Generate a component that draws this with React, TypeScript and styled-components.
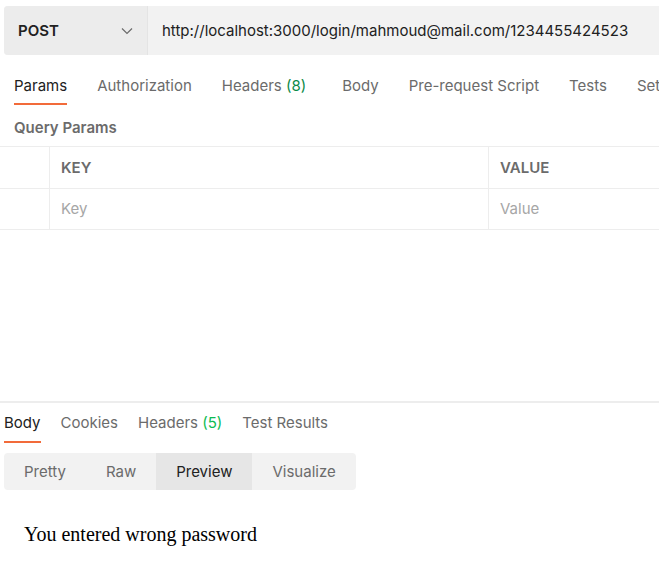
import React from "react";
import styled, { createGlobalStyle } from "styled-components";

const Global = createGlobalStyle`
  html, body { margin: 0; padding: 0; background: #ffffff; }
  body { font-family: Inter, "Noto Sans", "Liberation Sans", sans-serif; }
  * { box-sizing: border-box; }
`;

const Page = styled.div`
  width: 659px;
  height: 569px;
  overflow: hidden;
  display: flex;
  flex-direction: column;
`;

const RequestBar = styled.div`
  display: flex;
  height: 49px;
  margin: 6px -40px 0 4px;
  border-radius: 4px;
  background: #f2f2f2;
  overflow: hidden;
`;

const MethodBox = styled.div`
  width: 144px;
  flex: none;
  display: flex;
  align-items: center;
  justify-content: space-between;
  padding: 0 14px 0 14px;
  background: #ececec;
  border-right: 1px solid #e4e4e4;
  font-weight: 600;
  font-size: 15px;
  color: #212121;
`;

const UrlText = styled.div`
  display: flex;
  align-items: center;
  padding-left: 14px;
  font-size: 15px;
  color: #212121;
  white-space: nowrap;
`;

const TabRow = styled.div<{ $gap: number; $pad: number; $top: number }>`
  display: flex;
  gap: ${(p) => p.$gap}px;
  padding-left: ${(p) => p.$pad}px;
  margin-top: ${(p) => p.$top}px;
  white-space: nowrap;
`;

const Tab = styled.div<{ $active?: boolean; $pt: number; $pb: number }>`
  padding-top: ${(p) => p.$pt}px;
  padding-bottom: ${(p) => p.$pb}px;
  line-height: 20px;
  font-size: 15px;
  color: ${(p) => (p.$active ? "#212121" : "#6b6b6b")};
  border-bottom: 2px solid ${(p) => (p.$active ? "#f26b3a" : "transparent")};
`;

const Count = styled.span<{ $color: string }>`
  color: ${(p) => p.$color};
`;

const SectionLabel = styled.div`
  padding: 13px 14px 8px;
  line-height: 20px;
  font-size: 15px;
  font-weight: 600;
  color: #6b6b6b;
`;

const Table = styled.div`
  display: grid;
  grid-template-columns: 49px 439px 1fr;
  border-top: 1px solid #ededed;
`;

const Cell = styled.div<{ $head?: boolean }>`
  height: ${(p) => (p.$head ? 42 : 41)}px;
  display: flex;
  align-items: center;
  padding-left: 11px;
  padding-bottom: ${(p) => (p.$head ? 0 : 2)}px;
  border-bottom: 1px solid #ededed;
  border-left: 1px solid #ededed;
  font-size: 15px;
  font-weight: ${(p) => (p.$head ? 600 : 400)};
  color: ${(p) => (p.$head ? "#6b6b6b" : "#a6a6a6")};
  &:nth-child(3n + 1) {
    border-left: none;
  }
`;

const Spacer = styled.div`
  flex: 1;
`;

const Divider = styled.div`
  height: 2px;
  background: #ededed;
  flex: none;
`;

const Segmented = styled.div`
  display: flex;
  align-self: flex-start;
  margin: 10px 0 0 4px;
  height: 37px;
  border-radius: 4px;
  background: #f2f2f2;
  overflow: hidden;
`;

const Segment = styled.div<{ $active?: boolean }>`
  display: flex;
  align-items: center;
  padding: 0 20px;
  font-size: 15px;
  color: ${(p) => (p.$active ? "#212121" : "#6b6b6b")};
  background: ${(p) => (p.$active ? "#e6e6e6" : "transparent")};
`;

const Preview = styled.div`
  margin: 33px 0 23px 24px;
  font-family: "Liberation Serif", "Times New Roman", serif;
  font-size: 20px;
  line-height: 23px;
  color: #000000;
`;

const Chevron = () => (
  <svg width="12" height="8" viewBox="0 0 12 8" fill="none">
    <path d="M1 1.5 L6 6.5 L11 1.5" stroke="#6b6b6b" strokeWidth="1.2" />
  </svg>
);

export default function App() {
  return (
    <Page>
      <Global />
      <RequestBar>
        <MethodBox>
          <span>POST</span>
          <Chevron />
        </MethodBox>
        <UrlText>http://localhost:3000/login/mahmoud@mail.com/1234455424523</UrlText>
      </RequestBar>

      <TabRow $gap={30} $pad={14} $top={10}>
        <Tab $active $pt={11} $pb={7}>Params</Tab>
        <Tab $pt={11} $pb={7}>Authorization</Tab>
        <Tab $pt={11} $pb={7} style={{ marginRight: 6 }}>
          Headers <Count $color="#0b8a47">(8)</Count>
        </Tab>
        <Tab $pt={11} $pb={7}>Body</Tab>
        <Tab $pt={11} $pb={7}>Pre-request Script</Tab>
        <Tab $pt={11} $pb={7}>Tests</Tab>
        <Tab $pt={11} $pb={7}>Settings</Tab>
      </TabRow>

      <SectionLabel>Query Params</SectionLabel>
      <Table>
        <Cell $head />
        <Cell $head>KEY</Cell>
        <Cell $head>VALUE</Cell>
        <Cell />
        <Cell>Key</Cell>
        <Cell>Value</Cell>
      </Table>

      <Spacer />
      <Divider />

      <TabRow $gap={20} $pad={4} $top={0}>
        <Tab $active $pt={10} $pb={8}>Body</Tab>
        <Tab $pt={10} $pb={8}>Cookies</Tab>
        <Tab $pt={10} $pb={8}>
          Headers <Count $color="#0cbb52">(5)</Count>
        </Tab>
        <Tab $pt={10} $pb={8}>Test Results</Tab>
      </TabRow>

      <Segmented>
        <Segment>Pretty</Segment>
        <Segment>Raw</Segment>
        <Segment $active>Preview</Segment>
        <Segment>Visualize</Segment>
      </Segmented>

      <Preview>You entered wrong password</Preview>
    </Page>
  );
}
